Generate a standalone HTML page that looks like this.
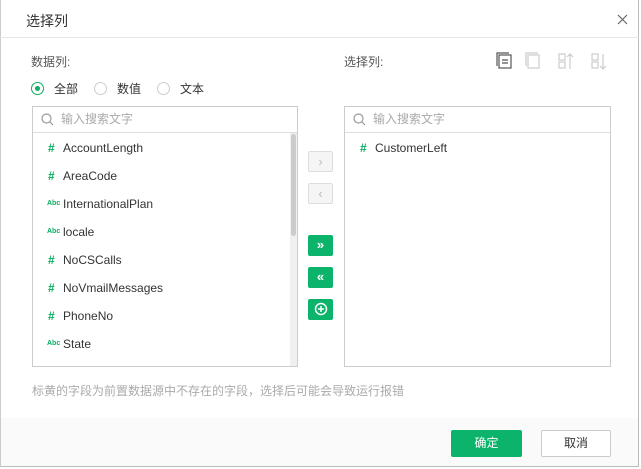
<html><head><style>
body{margin:0;width:641px;height:469px;background:#fff;font-family:"Liberation Sans","Noto Sans CJK SC",sans-serif;position:relative;overflow:hidden;color:#333}
.a{position:absolute}
.dlg{left:0;top:0;width:639px;height:467px;border:1px solid #bbb;border-top:none;border-left:1px solid #ccc;box-sizing:border-box}
.box{border:1px solid #ccc;box-sizing:border-box;background:#fff}
.srch{height:25px;border-bottom:1px solid #ddd;font-size:12px;color:#aaa;line-height:25px;padding-left:28px;position:relative}
.it{font-size:12px;color:#333;height:28px;line-height:30px;position:relative;padding-left:30px}
.h{position:absolute;left:15px;color:#0aad63;font-weight:bold;font-size:12px}
.ab{position:absolute;left:14px;color:#0aad63;font-size:7px;font-weight:bold}
.btn{width:25px;height:21px;box-sizing:border-box;border-radius:2px;text-align:center;line-height:20px;font-size:13px}
.g{background:#0bb46a;color:#fff;font-weight:bold}
.d{background:#f5f5f5;border:1px solid #ddd;color:#bbb}
.rd{width:13px;height:13px;border:1px solid #ccc;border-radius:50%;box-sizing:border-box}
</style></head><body>
<div class="a dlg"></div>
<div class="a" style="left:0;top:37px;width:639px;height:1px;background:#e6e6e6"></div>
<div class="a" style="left:26px;top:11px;font-size:14px;color:#333">选择列</div>
<svg class="a" style="left:617px;top:14px" width="11" height="11"><path d="M1 1l9 9M10 1l-9 9" stroke="#666" stroke-width="1.2"/></svg>
<div class="a" style="left:1px;top:418px;width:637px;height:48px;background:#fafafa"></div>

<div class="a" style="left:31px;top:53px;font-size:12px;color:#555">数据列:</div>
<div class="a rd" style="left:31px;top:82px;border-color:#0aad63"><div style="width:5px;height:5px;background:#0aad63;border-radius:50%;margin:3px"></div></div>
<div class="a" style="left:54px;top:80px;font-size:12px">全部</div>
<div class="a rd" style="left:94px;top:82px"></div>
<div class="a" style="left:117px;top:80px;font-size:12px">数值</div>
<div class="a rd" style="left:157px;top:82px"></div>
<div class="a" style="left:180px;top:80px;font-size:12px">文本</div>

<div class="a box" style="left:32px;top:106px;width:266px;height:261px">
<div class="srch"><svg class="a" style="left:8px;top:6px" width="13" height="13"><circle cx="5.5" cy="5.5" r="4.5" fill="none" stroke="#999" stroke-width="1.2"/><path d="M9 9l3 3" stroke="#999" stroke-width="1.2"/></svg>输入搜索文字</div>
<div class="a" style="left:257px;top:26px;width:7px;height:233px;background:#f0f0f0"></div>
<div class="a" style="left:258px;top:27px;width:5px;height:102px;background:#ccc;border-radius:3px"></div>
<div class="it"><span class="h">#</span>AccountLength</div>
<div class="it"><span class="h">#</span>AreaCode</div>
<div class="it"><span class="ab">Abc</span>InternationalPlan</div>
<div class="it"><span class="ab">Abc</span>locale</div>
<div class="it"><span class="h">#</span>NoCSCalls</div>
<div class="it"><span class="h">#</span>NoVmailMessages</div>
<div class="it"><span class="h">#</span>PhoneNo</div>
<div class="it"><span class="ab">Abc</span>State</div>
</div>

<div class="a btn d" style="left:308px;top:151px">›</div>
<div class="a btn d" style="left:308px;top:183px">‹</div>
<div class="a btn g" style="left:308px;top:235px">»</div>
<div class="a btn g" style="left:308px;top:267px">«</div>
<div class="a btn g" style="left:308px;top:299px"><svg width="14" height="14" style="margin-top:3px"><circle cx="7" cy="7" r="5.5" fill="none" stroke="#fff" stroke-width="1.5"/><path d="M7 4v6M4 7h6" stroke="#fff" stroke-width="1.5"/></svg></div>

<div class="a" style="left:344px;top:53px;font-size:12px;color:#555">选择列:</div>
<svg class="a" style="left:496px;top:52px" width="120" height="18" fill="none" stroke-width="1.2">
<rect x="3" y="3" width="12" height="13" stroke="#555"/><path d="M1 14V1h12" stroke="#555"/><path d="M6 8h6M6 11h6" stroke="#555"/>
<rect x="32" y="3" width="11" height="13" stroke="#ccc"/><path d="M30 14V1h12" stroke="#ccc"/>
<rect x="63" y="2" width="6" height="6" stroke="#ccc"/><rect x="63" y="10" width="6" height="6" stroke="#ccc"/><path d="M74 2v15M71 5l3-3 3 3" stroke="#ccc"/>
<rect x="96" y="2" width="6" height="6" stroke="#ccc"/><rect x="96" y="10" width="6" height="6" stroke="#ccc"/><path d="M107 2v15M104 14l3 3 3-3" stroke="#ccc"/>
</svg>

<div class="a box" style="left:344px;top:106px;width:267px;height:261px">
<div class="srch"><svg class="a" style="left:8px;top:6px" width="13" height="13"><circle cx="5.5" cy="5.5" r="4.5" fill="none" stroke="#999" stroke-width="1.2"/><path d="M9 9l3 3" stroke="#999" stroke-width="1.2"/></svg>输入搜索文字</div>
<div class="it"><span class="h">#</span>CustomerLeft</div>
</div>

<div class="a" style="left:32px;top:382px;font-size:12px;color:#aaa">标黄的字段为前置数据源中不存在的字段，选择后可能会导致运行报错</div>

<div class="a" style="left:451px;top:430px;width:71px;height:27px;background:#0bb46a;border-radius:2px;color:#fff;font-size:12px;text-align:center;line-height:27px">确定</div>
<div class="a" style="left:541px;top:430px;width:70px;height:27px;border:1px solid #ccc;box-sizing:border-box;background:#fff;border-radius:2px;color:#333;font-size:12px;text-align:center;line-height:25px">取消</div>
</body></html>
